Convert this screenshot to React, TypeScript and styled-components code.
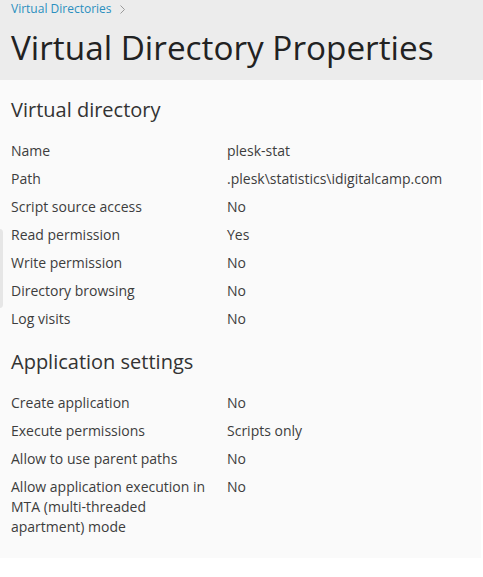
import React from "react";
import styled, { createGlobalStyle } from "styled-components";

const Global = createGlobalStyle`
  html, body { margin: 0; padding: 0; background: #ffffff; }
  body { font-family: "Open Sans", "Liberation Sans", sans-serif; color: #333333; }
`;

const Page = styled.div`
  position: relative;
  width: 483px;
`;

const Header = styled.header`
  background: #ececec;
  padding: 1px 11px 0 11px;
  height: 79px;
`;

const Breadcrumb = styled.nav`
  display: flex;
  align-items: center;
  gap: 8px;
  font-size: 12px;
  line-height: 16px;
  color: #2a8fbf;
`;

const Chevron = styled.svg`
  width: 5px;
  height: 9px;
  margin-top: 1px;
`;

const Title = styled.h1`
  margin: 8px 0 0 0;
  font-size: 33.3px;
  line-height: 44px;
  font-weight: 400;
  color: #222222;
`;

const Panel = styled.main`
  background: #fafafa;
  width: 481px;
  padding: 16px 0 17px 0;
`;

const Section = styled.section`
  padding: 0 11px;
  & + & { margin-top: 15px; }
`;

const SectionTitle = styled.h2`
  margin: 0 0 13px 0;
  font-size: 20px;
  line-height: 28px;
  font-weight: 400;
  color: #333333;
`;

const Row = styled.div`
  display: grid;
  grid-template-columns: 216px 1fr;
  padding: 4px 0;
  font-size: 14px;
  line-height: 20px;
`;

const Label = styled.div`
  padding-right: 12px;
  color: #3d3d3d;
`;

const Value = styled.div`
  color: #3d3d3d;
`;

const SideHandle = styled.div`
  position: absolute;
  left: -4px;
  top: 229px;
  width: 7px;
  height: 79px;
  border-radius: 4px;
  background: #e6e6e6;
`;

const sections: { title: string; rows: [string, string][] }[] = [
  {
    title: "Virtual directory",
    rows: [
      ["Name", "plesk-stat"],
      ["Path", ".plesk\\statistics\\idigitalcamp.com"],
      ["Script source access", "No"],
      ["Read permission", "Yes"],
      ["Write permission", "No"],
      ["Directory browsing", "No"],
      ["Log visits", "No"],
    ],
  },
  {
    title: "Application settings",
    rows: [
      ["Create application", "No"],
      ["Execute permissions", "Scripts only"],
      ["Allow to use parent paths", "No"],
      ["Allow application execution in MTA (multi-threaded apartment) mode", "No"],
    ],
  },
];

export default function App() {
  return (
    <Page>
      <Global />
      <Header>
        <Breadcrumb>
          <span>Virtual Directories</span>
          <Chevron viewBox="0 0 5 9">
            <path d="M0.5 0.5 L4.5 4.5 L0.5 8.5" fill="none" stroke="#9a9a9a" strokeWidth="1" />
          </Chevron>
        </Breadcrumb>
        <Title>Virtual Directory Properties</Title>
      </Header>
      <Panel>
        {sections.map((s) => (
          <Section key={s.title}>
            <SectionTitle>{s.title}</SectionTitle>
            {s.rows.map(([l, v]) => (
              <Row key={l}>
                <Label>{l}</Label>
                <Value>{v}</Value>
              </Row>
            ))}
          </Section>
        ))}
      </Panel>
      <SideHandle />
    </Page>
  );
}
